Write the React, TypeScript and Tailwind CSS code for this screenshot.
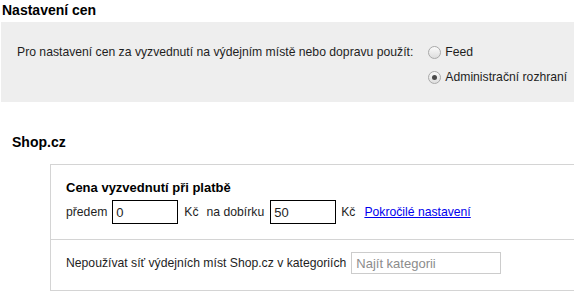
import React from "react";

function Radio({ checked }: { checked?: boolean }) {
  return (
    <span className="flex h-[13px] w-[13px] shrink-0 items-center justify-center rounded-full border border-[#a9a9a9] bg-gradient-to-b from-[#fafafa] to-[#dedede]">
      {checked && <span className="h-[5px] w-[5px] rounded-full bg-[#4a4a4a]" />}
    </span>
  );
}

export default function App() {
  return (
    <div className="h-[297px] w-[574px] overflow-hidden bg-white font-['Liberation_Sans',Arial,sans-serif] text-[12.2px] leading-[14px] text-[#1e1e1e]">
      <h2 className="h-[22px] pl-[2px] pt-[2px] text-[14px] font-bold leading-[16px] text-black">
        Nastavení cen
      </h2>

      <div className="ml-px flex h-[80px] bg-[#eeeeee] pt-[23px]">
        <div className="pl-[16px] pr-[15px]">
          Pro nastavení cen za vyzvednutí na výdejním místě nebo dopravu použít:
        </div>
        <div className="flex flex-col gap-[11px]">
          <label className="flex items-center gap-[4px]">
            <Radio />
            Feed
          </label>
          <label className="flex items-center gap-[4px]">
            <Radio checked />
            Administrační rozhraní
          </label>
        </div>
      </div>

      <h2 className="mt-[32px] pl-[12px] text-[14px] font-bold leading-[16px] text-black">
        Shop.cz
      </h2>

      <div className="ml-[50px] mt-[14px] w-[560px] border border-[#d4d4d4]">
        <div className="px-[15px] pb-[15px] pt-[15px]">
          <div className="text-[13px] font-bold leading-[15px] text-black">
            Cena vyzvednutí při platbě
          </div>
          <div className="mt-[5px] flex items-center">
            <span>předem</span>
            <input
              defaultValue="0"
              className="ml-[5px] h-[24px] w-[66px] border border-black bg-white pl-[3px] text-[13px] text-[#1e1e1e] outline-none"
            />
            <span className="ml-[6px]">Kč</span>
            <span className="ml-[8px]">na dobírku</span>
            <input
              defaultValue="50"
              className="ml-[6px] h-[24px] w-[66px] border border-black bg-white pl-[3px] text-[13px] text-[#1e1e1e] outline-none"
            />
            <span className="ml-[5px]">Kč</span>
            <a href="#" className="ml-[9px] text-[#0000ee] underline">
              Pokročilé nastavení
            </a>
          </div>
        </div>
        <div className="flex items-center border-t border-[#d4d4d4] px-[15px] pb-[16px] pt-[12px]">
          <span>Nepoužívat síť výdejních míst Shop.cz v kategoriích</span>
          <input
            placeholder="Najít kategorii"
            className="ml-[5px] h-[22px] w-[150px] border border-[#cccccc] bg-white pl-[4px] text-[13px] outline-none placeholder:text-[#8c8c8c]"
          />
        </div>
      </div>
    </div>
  );
}
